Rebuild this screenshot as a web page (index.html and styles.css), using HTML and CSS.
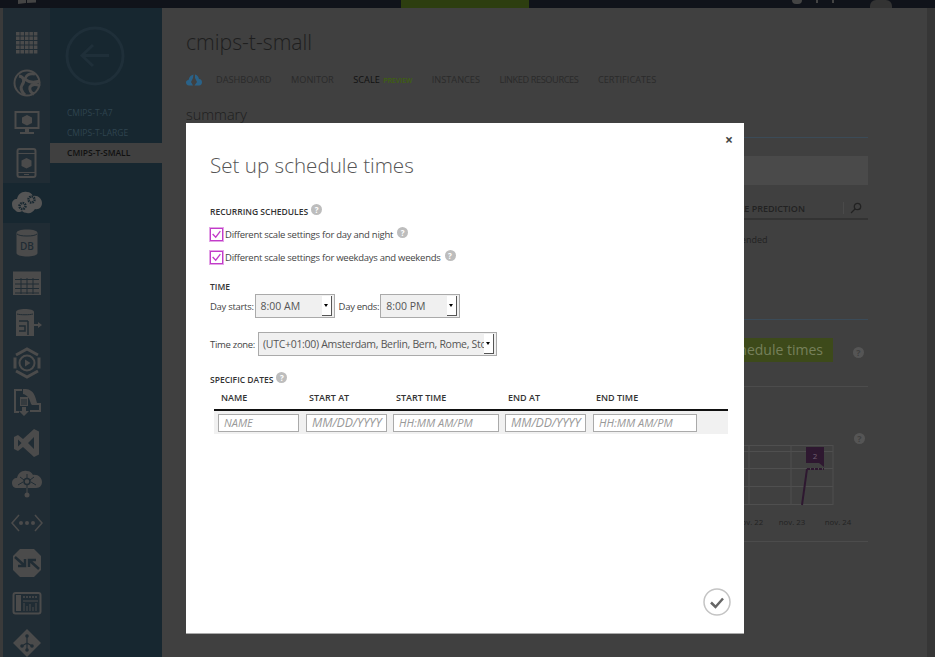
FILE: index.html
```html
<!DOCTYPE html>
<html lang="en">
<head>
  <meta charset="UTF-8" />
  <title>Set up schedule times</title>
  <link rel="stylesheet" href="styles.css">
</head>
<body>
  <!-- Top bar -->
  <header class="topbar">
    <svg class="top-logo" viewBox="0 0 18 4"><path d="M0 0h8v3l-8 1zM9 0h9v2.500L9 3z"/></svg>
    <span class="top-brand">WINDOWS AZURE</span>
    <div class="top-credit"></div>
    <div class="top-tools"><span class="top-dot"></span><span class="top-tick"></span><span class="top-tick"></span></div>
    <div class="top-tab"></div>
  </header>

  <div class="shell">
    <!-- Service icons -->
    <nav class="nav">
      <div class="nav-item">
        <svg viewBox="0 0 32 32"><g class="st" stroke-width="3.6" stroke-dasharray="3.6 .85"><path d="M5 7.800h22M5 12.300h22M5 16.800h22M5 21.200h22M5 25.700h22" transform="translate(0 -1)"/></g></svg>
      </div>
      <div class="nav-item">
        <svg viewBox="0 0 32 32"><circle class="ln" cx="16" cy="16" r="12.500" stroke-width="2"/><path class="ln" stroke-width="3" d="M8 9c5 1 6 5 3 9-2 3 0 7 3 10M24 7c-5-1-9 1-10 5 4 4 9 4 15 2M29 19c-4-2-8-2-10 1-1 3 1 6 4 7"/></svg>
      </div>
      <div class="nav-item">
        <svg viewBox="0 0 32 32"><rect class="ln" x="4.500" y="5" width="23" height="16" stroke-width="2"/><path class="fl" d="M16 8l5 2.500v5.500l-5 2.500-5-2.500v-5.500zM14 22h4v3h5v2H9v-2h5z"/></svg>
      </div>
      <div class="nav-item">
        <svg viewBox="0 0 32 32"><rect class="ln" x="6.500" y="2" width="18" height="28" rx="2" stroke-width="2"/><path class="ln" stroke-width="1" d="M7 6.500h17M7 25.500h17"/><path class="fl" d="M15.500 11l5 2.500v5.500l-5 2.500-5-2.500v-5.500zM13 27h5v1h-5z"/></svg>
      </div>
      <div class="nav-item active">
        <svg viewBox="0 0 32 32"><path class="fl lit" d="M1 17c0-3 2-5 5-5 1-5 5-8 10-7 3 0 5 2 6 4 5-1 9 3 9 7 0 4-3 7-7 6-2 3-5 5-8 4-2 0-4-1-5-2-2 2-6 1-7-1-2-1-3-3-3-6z"/><circle class="gear" cx="11.500" cy="19" r="3" stroke-width="2.500" stroke-dasharray="1.500 .8"/><circle class="gear" cx="20.500" cy="12.500" r="3" stroke-width="2.500" stroke-dasharray="1.500 .8"/></svg>
      </div>
      <div class="nav-item">
        <svg viewBox="0 0 32 32"><path class="fl" d="M5.500 6c0-2 4-3.500 10.500-3.500S26.500 4 26.500 6v20c0 2-4 3.500-10.500 3.500S5.500 28 5.500 26z"/><path class="ln nv" stroke-width="1" d="M6 7c2 1.500 5 2 10 2s8-.5 10-2"/><text class="db" x="16" y="23">DB</text></svg>
      </div>
      <div class="nav-item">
        <svg viewBox="0 0 32 32"><rect class="fl" x="2" y="4.500" width="28" height="23.500"/><path class="ln nv" stroke-width="1" d="M4 12.500h24M4 17h24M4 21.500h24M4 26h24M10 11v16M16 11v16M22 11v16"/></svg>
      </div>
      <div class="nav-item">
        <svg viewBox="0 0 32 32"><path class="fl" d="M5 5c0-2 4-3 9-3s9 1 9 3v24H5z"/><path class="ln nv" stroke-width="1" d="M6 7c3 1 13 1 16 0"/><path class="ln nv" stroke-width="1.500" d="M8 14h9M8 19h6v5H8M17 14v14"/><path class="fl" d="M18 17h9v-2l4 3-4 3v-2h-9z"/></svg>
      </div>
      <div class="nav-item">
        <svg viewBox="0 0 32 32"><path class="ln" stroke-width="3" d="M4 10.500v11M28 10.500v11M5 8l11-6 11 6M5 24l11 6 11-6"/><circle class="ln" cx="16" cy="16" r="7.500" stroke-width="2"/><path class="fl" d="M14 12.500l5.500 3.500-5.500 3.500z"/></svg>
      </div>
      <div class="nav-item">
        <svg viewBox="0 0 32 32"><path class="ln" stroke-width="2" d="M11 3H4v22h4"/><path class="fl" d="M12 2h3c8 1 9 7 11 14h4v9H19v-2h9v-5h-7l-1-1c-1-4-3-9-8-10z"/><path class="fl" d="M9 10h8v9H9zM11 20h4v4h3l-5 5-5-5h3z"/><path class="ln nv" stroke-width="1" d="M10 13h6M10 15h6M10 17h6"/></svg>
      </div>
      <div class="nav-item">
        <svg viewBox="0 0 32 32"><path class="fl" d="M23 2l5 2.500v23L23 30 12 20l-5 4-4-2V10l4-2 5 4zM7 12.500v7l3.500-3.500zM23 10l-6 6 6 6z" fill-rule="evenodd"/></svg>
      </div>
      <div class="nav-item">
        <svg viewBox="0 0 32 32"><path class="fl" d="M1 16c0-3 2-5 5-5 1-5 5-8 10-7 3 0 5 2 6 4 5-1 9 3 9 7 0 3-2 6-6 6H6c-3 0-5-2-5-5z"/><path class="ln nv" stroke-width="1" d="M16 7v4M16 18v3M9 10l4 3M23 10l-4 3M7 18l5-3M25 18l-5-3"/><circle class="ln nv" cx="16" cy="14.500" r="3" stroke-width="1.500"/><path class="ln" stroke-width="1" d="M16 21v6"/><circle class="fl" cx="16" cy="28" r="2.500"/></svg>
      </div>
      <div class="nav-item">
        <svg viewBox="0 0 32 32"><path class="ln" stroke-width="1.500" d="M8 8l-7 8 7 8M24 8l7 8-7 8"/><circle class="fl" cx="10" cy="16" r="2"/><circle class="fl" cx="16" cy="16" r="2"/><circle class="fl" cx="22" cy="16" r="2"/></svg>
      </div>
      <div class="nav-item">
        <svg viewBox="0 0 32 32"><path class="fl" d="M9 2h14l7 7v14l-7 7H9l-7-7V9z"/><path class="ln nv" stroke-width="2.500" d="M4 10l10 9M14 12v7H7M28 22L18 13M18 20v-7h7"/></svg>
      </div>
      <div class="nav-item">
        <svg viewBox="0 0 32 32"><rect class="ln" x="2.500" y="6" width="27" height="20.500" rx="2" stroke-width="2"/><path class="fl" d="M5 8h5v16H5z"/><path class="ln" stroke-width="1.500" stroke-dasharray="2 1" d="M12 10h15"/><path class="ln" stroke-width="1" d="M12 14h15M13 24v-8M16 24v-5M19 24v-7M22 24v-4M25 24v-8"/></svg>
      </div>
      <div class="nav-item">
        <svg viewBox="0 0 32 32"><path class="fl" d="M16 2l14 14-14 14L2 16z"/><path class="ln nv" stroke-width="1.200" d="M16 9v14M16 16l-5 3M16 16l5 3"/><circle class="nvf" cx="16" cy="9" r="1.800"/><circle class="nvf" cx="16" cy="23" r="1.800"/><circle class="nvf" cx="11" cy="19" r="1.800"/><circle class="nvf" cx="21" cy="19" r="1.800"/></svg>
      </div>
    </nav>

    <!-- Sub navigation -->
    <aside class="panel">
      <svg class="back" viewBox="0 0 60 60"><circle cx="30" cy="30" r="28"/><path d="M44 29.500H17M28 19L17 29.500 28 40"/></svg>
      <ul class="panel-list">
        <li>CMIPS-T-A7</li>
        <li>CMIPS-T-LARGE</li>
        <li class="current">CMIPS-T-SMALL</li>
      </ul>
    </aside>

    <!-- Page behind the dialog -->
    <main class="main">
      <h2 class="page-title">cmips-t-small</h2>
      <div class="tabs">
        <svg class="tab-icon" viewBox="0 0 16 13"><path d="M3 12.500C1 12.500 0 11 0 9.500S1 7 2.500 7C3 4 5 2 7.500 1.500L7 5 5 9l2 3.500zM9 1.500C11 2 12.500 3.500 13 6c2 0 3 1.500 3 3.200s-1 3.300-3 3.300H8.500L11 9 9 5z"/></svg>
        <span>DASHBOARD</span>
        <span>MONITOR</span>
        <span class="on">SCALE <em>PREVIEW</em></span>
        <span>INSTANCES</span>
        <span class="tight">LINKED RESOURCES</span>
        <span>CERTIFICATES</span>
      </div>
      <h3 class="summary">summary</h3>
      <div class="rule blue"></div>
      <div class="band"></div>
      <div class="grid-head"><span>SCALE PREDICTION</span><svg class="search" viewBox="0 0 12 12"><circle cx="7.500" cy="4.500" r="3.200"/><path d="M5 7L1 11"/></svg></div>
      <p class="predict">Not recommended</p>
      <div class="rule blue second"></div>
      <div class="action-row"><span class="action">Set up schedule times</span><i class="help-dark">?</i></div>
      <div class="rule"></div>
      <div class="chart-row">
        <svg class="chart" viewBox="0 0 120 90">
          <path class="grid" d="M0 .5h110M0 6.500h110M0 23.500h110M0 41.500h110M0 59.500h110M26 0v60M68 0v60M110 0v60"/>
          <path class="plot" d="M79 60l5-36"/><path class="plot dots" d="M84 24h17"/>
          <rect class="tip" x="83" y="2" width="18" height="16"/>
          <path class="tip" d="M96 18h5v4z"/>
          <text class="tip-text" x="92" y="14">2</text>
          <text class="tick" x="27" y="80">nov. 22</text>
          <text class="tick" x="69" y="80">nov. 23</text>
          <text class="tick" x="115" y="80">nov. 24</text>
        </svg>
        <i class="help-dark">?</i>
      </div>
      <div class="rule"></div>
    </main>
    <div class="scroller"></div>
  </div>

  <!-- Dialog -->
  <div class="dialog">
    <button class="close" type="button">&times;</button>
    <h1>Set up schedule times</h1>

    <h4 class="label first">RECURRING SCHEDULES <i class="help">?</i></h4>
    <div class="check-row">
      <span class="check"><svg viewBox="0 0 10 10"><path d="M1.500 4.500l2.800 3L8.500 2"/></svg></span>
      Different scale settings for day and night <i class="help">?</i>
    </div>
    <div class="check-row">
      <span class="check"><svg viewBox="0 0 10 10"><path d="M1.500 4.500l2.800 3L8.500 2"/></svg></span>
      Different scale settings for weekdays and weekends <i class="help">?</i>
    </div>

    <h4 class="label time">TIME</h4>
    <div class="field-row">
      <span>Day starts:</span>
      <div class="select short">8:00 AM<b class="arrow"></b></div>
      <span class="next">Day ends:</span>
      <div class="select short">8:00 PM<b class="arrow"></b></div>
    </div>
    <div class="field-row zone">
      <span>Time zone:</span>
      <div class="select wide"><span class="select-text">(UTC+01:00) Amsterdam, Berlin, Bern, Rome, Stockholm, Vienna</span><b class="arrow"></b></div>
    </div>

    <h4 class="label dates">SPECIFIC DATES <i class="help">?</i></h4>
    <div class="dates-table">
      <div class="dates-head">
        <span>NAME</span><span>START AT</span><span>START TIME</span><span>END AT</span><span>END TIME</span>
      </div>
      <div class="dates-row">
        <input type="text" placeholder="NAME">
        <input class="date" type="text" placeholder="MM/DD/YYYY">
        <input type="text" placeholder="HH:MM AM/PM">
        <input class="date" type="text" placeholder="MM/DD/YYYY">
        <input type="text" placeholder="HH:MM AM/PM">
      </div>
    </div>

    <button class="ok" type="button"><svg viewBox="0 0 28 28"><circle cx="14" cy="14" r="13"/><path d="M8 14.500l4.500 4.500L20 10.500"/></svg></button>
  </div>
</body>
</html>
```

FILE: styles.css
```css
html, body { margin:0; padding:0; height:100%; }
body {
  height:657px;
  overflow:hidden;
  background:#404040;
  font-family:"Open Sans", "Noto Sans", sans-serif;
  color:#333;
  position:relative;
}
/* Top bar */
.topbar {
  height:8px;
  background:#10131a;
  display:flex;
  overflow:hidden;
}
.top-logo { width:18px; height:4px; margin-left:18px; fill:#444; }
.top-brand {
  width:104px;
  margin:-9px 0 0 5px;
  font-size:9px;
  line-height:12px;
  color:#3c3c3c;
  white-space:nowrap;
}
.top-credit { width:128px; height:8px; margin-left:256px; background:#2d3e10; }
.top-tools { display:flex; gap:14px; margin-left:263px; }
.top-dot { width:10px; height:4px; background:#444; border-radius:0 0 5px 5px; }
.top-tick { width:2px; height:3px; background:#444; }
.top-tab { width:22px; height:8px; margin-left:36px; background:#333; border-radius:6px 6px 0 0; }

.shell {
  display:flex;
  height:649px;
  padding-left:3px;
  background:#3a3a3a;
}
/* Service icons */
.nav {
  width:47px;
  flex:none;
  padding-top:15px;
  background:#202c34;
  box-sizing:border-box;
}
.nav-item {
  height:40px;
  display:flex;
  align-items:center;
  justify-content:center;
}
.nav-item.active { background:#172730; }
.nav-item svg { width:32px; height:32px; }
.st { stroke:#4b4b4b; fill:none; }
.ln { stroke:#4b4b4b; fill:none; }
.fl { fill:#4b4b4b; }
.fl.lit { fill:#555; }
.ln.nv { stroke:#202c34; }
.nvf { fill:#202c34; }
.gear { fill:none; stroke:#172730; }
.db { fill:#202c34; font-size:10px; font-weight:600; text-anchor:middle; }

/* Sub navigation */
.panel {
  width:112px;
  flex:none;
  background:#172730;
}
.back {
  display:block;
  width:60px;
  height:60px;
  margin:18px 0 0 15px;
  fill:none;
  stroke:#1f2f39;
  stroke-width:3;
}
.panel-list {
  list-style:none;
  margin:17px 0 0;
  padding:0;
}
.panel-list li {
  height:20px;
  line-height:20px;
  padding-left:17px;
  font-size:8.500px;
  color:#2f444f;
}
.panel-list li.current {
  background:#404040;
  color:#111;
  font-weight:600;
}

/* Page behind the dialog */
.main {
  flex:1;
  background:#404040;
  padding:0 59px 0 24px;
}
.page-title {
  margin:20px 0 0;
  font-size:21.200px;
  font-weight:300;
  line-height:28px;
  color:#1e1e1e;
}
.tabs {
  display:flex;
  align-items:center;
  gap:19.500px;
  height:14px;
  margin-top:16px;
  font-size:9.200px;
  color:#2a2a2a;
}
.tab-icon { width:16px; height:13px; fill:#2a6288; margin-right:-5.500px; }
.tabs .on { color:#111; }
.tabs em { font-style:normal; font-size:7px; font-weight:600; letter-spacing:-.1px; color:#3f6010; margin-left:1px; }
.tabs .tight { letter-spacing:-.4px; }
.summary {
  margin:20px 0 0;
  font-size:14.500px;
  font-weight:300;
  line-height:18px;
  color:#1e1e1e;
}
.rule { height:1px; background:#4c4c4c; }
.rule.blue { background:#3b4b58; margin-top:13px; }
.rule.second { margin-top:73px; }
.band { height:29px; margin-top:18px; background:#4a4a4a; }
.grid-head {
  display:flex;
  justify-content:flex-end;
  align-items:center;
  height:20px;
  margin-top:13px;
  border-bottom:2px solid #333;
  font-size:9px;
  font-weight:600;
  color:#222;
}
.search {
  width:12px;
  height:12px;
  margin-left:38px;
  padding-left:6px;
  padding-right:6px;
  border-left:1px solid #4a4a4a;
  fill:none;
  stroke:#222;
  stroke-width:1.300;
}
.predict {
  margin:14px 0 0 502px;
  font-size:9px;
  line-height:12px;
  color:#222;
}
.action-row {
  display:flex;
  justify-content:flex-end;
  align-items:flex-start;
  height:66px;
  padding-right:4px;
}
.action {
  background:#3d4a1a;
  color:#76805a;
  font-size:14px;
  line-height:24px;
  padding:0 10px;
  margin:18px 20px 0 0;
}
.help-dark {
  width:11px;
  height:11px;
  border-radius:50%;
  background:#555;
  color:#404040;
  font:700 9px/11px "Open Sans", sans-serif;
  text-align:center;
}
.action-row .help-dark { margin-top:27px; }
.chart-row {
  display:flex;
  justify-content:flex-end;
  align-items:flex-start;
  height:154px;
}
.chart-row .help-dark { margin:46px 3px 0 0; }
.chart {
  width:120px;
  height:90px;
  margin:58px 0 0;
  overflow:visible;
  transform:translateX(-11px);
}
.grid { fill:none; stroke:#4f4f4f; stroke-width:1; }
.plot { fill:none; stroke:#2e1830; stroke-width:2; }
.dots { stroke-dasharray:3 1; }
.tip { fill:#2e1830; }
.tip-text { fill:#6e5f70; font-size:8px; text-anchor:middle; }
.tick { fill:#222; font-size:7.800px; text-anchor:middle; }
.scroller { width:8px; flex:none; background:#363636; }

/* Dialog */
.dialog {
  position:absolute;
  left:186px;
  top:123px;
  width:558px;
  height:510px;
  box-sizing:border-box;
  padding:26px 16px 0 24px;
  background:#fff;
  box-shadow:0 1px 0 #aaa;
}
.dialog h1 {
  margin:0;
  font-size:20.600px;
  font-weight:300;
  line-height:32px;
  color:#555;
}
.close {
  position:absolute;
  right:8px;
  top:8px;
  width:14px;
  height:18px;
  padding:0;
  border:none;
  background:none;
  font:700 14px/18px "Open Sans", sans-serif;
  color:#444;
}
.label {
  display:flex;
  align-items:center;
  gap:3px;
  margin:0;
  height:14px;
  font-size:8.500px;
  font-weight:600;
  color:#333;
}
.label.first { margin-top:23px; }
.label.time { margin-top:14px; }
.label.dates { margin-top:16px; }
.help {
  display:inline-block;
  width:11px;
  height:11px;
  border-radius:50%;
  background:#bdbdbd;
  color:#fff;
  font:700 8px/11px "Open Sans", sans-serif;
  letter-spacing:0;
  text-align:center;
  margin-top:-3px;
}
.check-row {
  display:flex;
  align-items:center;
  gap:2px;
  height:16px;
  margin-top:7px;
  font-size:9.500px;
  letter-spacing:-.26px;
  color:#444;
}
.label.first + .check-row { margin-top:8px; }
.check-row .help { margin-left:2px; }
.check {
  width:11px;
  height:11px;
  border:1px solid #c23bc9;
  outline:.5px solid #e3a5e6;
  display:flex;
}
.check svg { width:11px; height:11px; fill:none; stroke:#c23bc9; stroke-width:1.200; }
.field-row {
  display:flex;
  align-items:center;
  gap:1px;
  height:24px;
  margin-top:1px;
  font-size:9.500px;
  letter-spacing:-.3px;
  color:#444;
}
.field-row .next { margin-left:3px; }
.field-row.zone { margin-top:14px; }
.select {
  position:relative;
  height:22px;
  box-sizing:content-box;
  border:1px solid #aaa;
  background:#f0f0f0;
  line-height:23px;
  padding-left:5px;
  font-size:10.500px;
  letter-spacing:0;
  color:#555;
  overflow:hidden;
  white-space:nowrap;
}
.select.short { width:73px; }
.select.wide { width:233px; margin-left:2px; padding-left:4px; letter-spacing:-.3px; }
.select-text { display:block; width:221px; overflow:hidden; }
.arrow {
  position:absolute;
  right:2px;
  top:1px;
  width:10px;
  height:20px;
  background:#fff;
  border-right:1px solid #555;
  border-bottom:1px solid #555;
  box-sizing:border-box;
}
.arrow::after {
  content:"";
  position:absolute;
  left:2px;
  top:8px;
  border-left:2.500px solid transparent;
  border-right:2.500px solid transparent;
  border-top:3px solid #000;
}
.dates-table { width:514px; margin:3px 0 0 4px; }
.dates-head {
  display:grid;
  grid-template-columns:88px 87px 112px 88px 1fr;
  height:20px;
  padding-left:7px;
  border-bottom:2px solid #111;
  font-size:9px;
  font-weight:600;
  line-height:18px;
  color:#333;
}
.dates-row {
  display:flex;
  gap:7px;
  height:23px;
  align-items:center;
  padding-left:4px;
  background:#f1f1f1;
}
.dates-row input {
  box-sizing:border-box;
  height:18px;
  width:81px;
  margin:0;
  padding:0 0 0 5px;
  border:1px solid #aaa;
  background:#fff;
  font:italic 11px "Open Sans", sans-serif;
}
.dates-row input.date { font-size:12.300px; letter-spacing:-.1px; }
.dates-row input:nth-child(3) { width:106px; margin-left:-1px; margin-right:-1px; }
.dates-row input:nth-child(5) { width:104px; }
.dates-row input::placeholder { color:#999; opacity:1; }
.ok {
  position:absolute;
  right:13px;
  bottom:17px;
  width:28px;
  height:28px;
  padding:0;
  border:none;
  background:none;
}
.ok svg { display:block; width:28px; height:28px; fill:none; }
.ok circle { stroke:#c4c4c4; stroke-width:1.500; }
.ok path { stroke:#666; stroke-width:2.500; }
```
